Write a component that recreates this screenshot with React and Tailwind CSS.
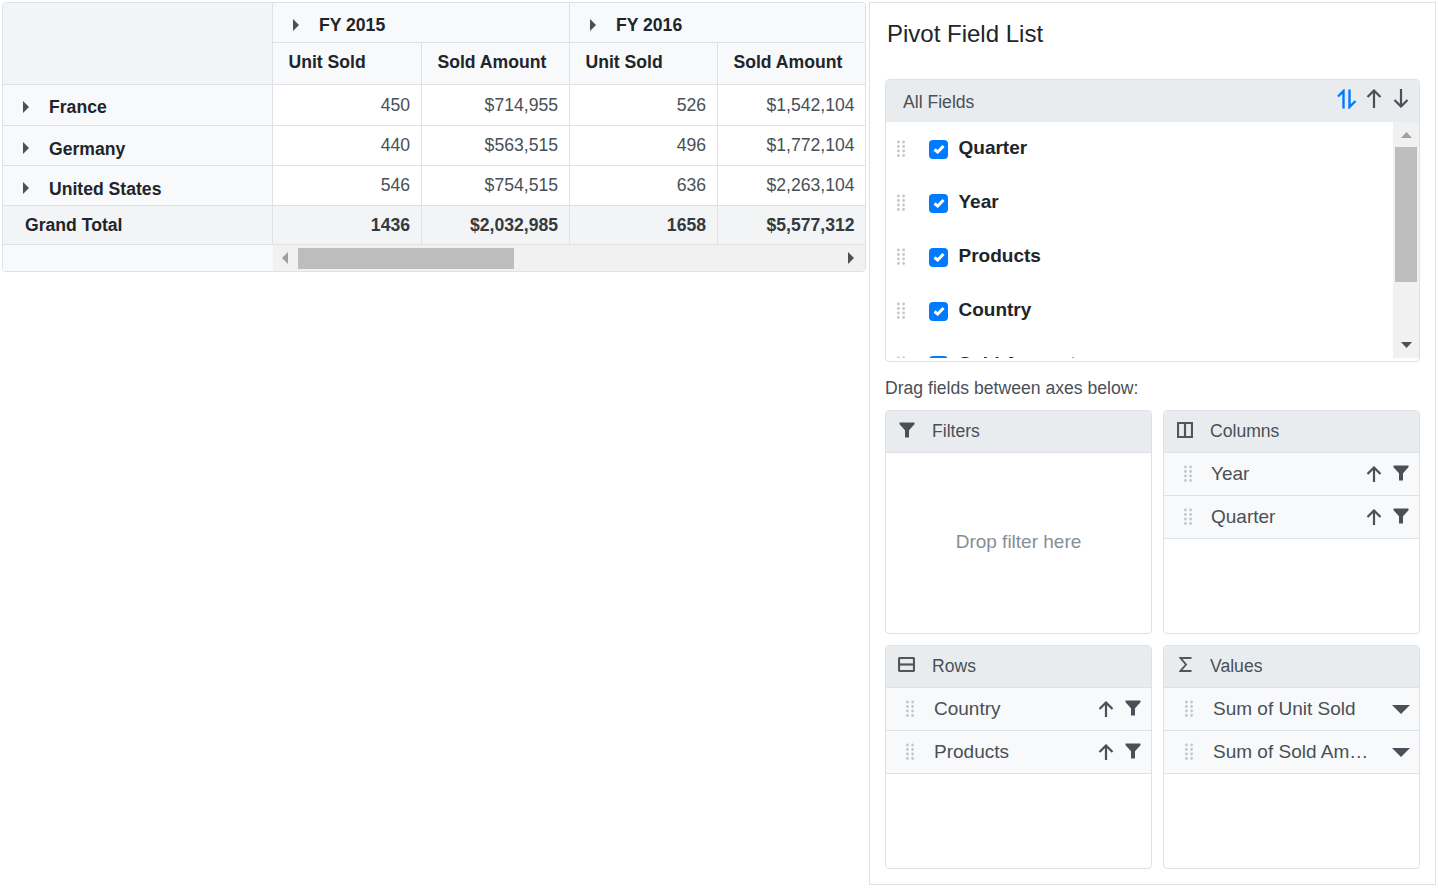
import React from 'react';

const Dots = ({ className = '' }) => (
  <svg width="8" height="18" viewBox="0 0 8 18" className={`shrink-0 ${className}`} fill="#c2c7ce">
    {[2, 6.5, 11, 15.5].map((y) => (
      <g key={y}>
        <circle cx="1.4" cy={y} r="1.4" />
        <circle cx="6.6" cy={y} r="1.4" />
      </g>
    ))}
  </svg>
);

const Funnel = ({ className = '' }) => (
  <svg width="16" height="16" viewBox="0 0 16 16" className={`shrink-0 ${className}`} fill="#495057">
    <path d="M0.5 0.5H15.5V2.2L10 8.2V15.5H6V8.2L0.5 2.2Z" />
  </svg>
);

const ArrowUp = ({ h = 16, color = '#495057', className = '' }) => (
  <svg width="16" height={h} viewBox={`0 0 16 ${h}`} className={`shrink-0 ${className}`} fill="none" stroke={color} strokeWidth="2.2">
    <path d={`M8 ${h}V2M1.5 8L8 1.5L14.5 8`} />
  </svg>
);

const ArrowDown = ({ h = 16, color = '#495057', className = '' }) => (
  <svg width="16" height={h} viewBox={`0 0 16 ${h}`} className={`shrink-0 ${className}`} fill="none" stroke={color} strokeWidth="2.2">
    <path d={`M8 0V${h - 2}M1.5 ${h - 8}L8 ${h - 1.5}L14.5 ${h - 8}`} />
  </svg>
);

const SortBoth = () => (
  <svg width="20" height="20" viewBox="0 0 20 20" className="shrink-0" fill="none" stroke="#007bff" strokeWidth="2.4">
    <path d="M6.5 19.5V2L1 7.5" />
    <path d="M12.5 0.5V18L18.5 12" />
  </svg>
);

const Caret = ({ dir }) => {
  const paths = {
    right: 'M0 0L6 6L0 12Z',
    left: 'M6 0L0 6L6 12Z',
  };
  return (
    <svg width="6" height="12" viewBox="0 0 6 12" className="shrink-0" fill="#495057">
      <path d={paths[dir]} />
    </svg>
  );
};

const CaretDown = ({ w = 18, h = 9, fill = '#495057' }) => (
  <svg width={w} height={h} viewBox="0 0 18 9" className="shrink-0" fill={fill} preserveAspectRatio="none">
    <path d="M0 0H18L9 9Z" />
  </svg>
);

const Check = () => (
  <span className="flex h-[19px] w-[19px] shrink-0 items-center justify-center rounded-[4px] bg-[#007bff]">
    <svg width="12" height="10" viewBox="0 0 12 10" fill="none" stroke="#fff" strokeWidth="3">
      <path d="M1.5 5.5L4.7 8L10.5 2" />
    </svg>
  </span>
);

const ColumnsIcon = () => (
  <svg width="16" height="16" viewBox="0 0 16 16" className="mb-[4px] shrink-0" fill="none" stroke="#555" strokeWidth="2.2">
    <path d="M1 1H15V15H1ZM8 1V15" />
  </svg>
);

const RowsIcon = () => (
  <svg width="17" height="15" viewBox="0 0 17 15" className="mb-[4px] shrink-0" fill="none" stroke="#555" strokeWidth="2.2">
    <rect x="1" y="1" width="15" height="13" rx="1" />
    <path d="M1 7.5H16" />
  </svg>
);

const SigmaIcon = () => (
  <svg width="13" height="15" viewBox="0 0 13 15" className="mb-[4px] shrink-0" fill="none" stroke="#555" strokeWidth="1.9">
    <path d="M12.5 1H1.5L7 7.5L1.5 14H12.5" />
  </svg>
);

const cell = 'flex items-center border-r border-b border-[#dee2e6]';

const data = [
  { name: 'France', h: 'pt-[3px]', vals: ['450', '$714,955', '526', '$1,542,104'] },
  { name: 'Germany', h: 'pt-[5px]', vals: ['440', '$563,515', '496', '$1,772,104'] },
  { name: 'United States', h: 'pt-[5px]', vals: ['546', '$754,515', '636', '$2,263,104'] },
];

const PivotGrid = () => (
  <div className="h-[270px] w-[864px] shrink-0 overflow-hidden rounded-[4px] border border-[#dee2e6] bg-white text-[17.6px] text-[#212529]">
    <div className="grid grid-cols-[270px_149px_148px_148px_148px] grid-rows-[40px_42px_41px_40px_40px_39px]">
      <div className={`${cell} row-span-2 bg-[#f3f4f6]`} />
      <div className={`${cell} col-span-2 gap-[20px] bg-[#f8f9fa] pl-[20px] pt-[4px] font-bold`}>
        <Caret dir="right" />
        <span className="mt-[2px]">FY 2015</span>
      </div>
      <div className={`${cell} col-span-2 gap-[20px] border-r-0 bg-[#f8f9fa] pl-[20px] pt-[4px] font-bold`}>
        <Caret dir="right" />
        <span className="mt-[2px]">FY 2016</span>
      </div>
      {['Unit Sold', 'Sold Amount', 'Unit Sold', 'Sold Amount'].map((t, i) => (
        <div key={i} className={`${cell} bg-[#f8f9fa] pb-[3px] pl-[15.5px] font-bold ${i === 3 ? 'border-r-0' : ''}`}>
          {t}
        </div>
      ))}
      {data.map((row) => (
        <React.Fragment key={row.name}>
          <div className={`${cell} gap-[20px] bg-[#f8f9fa] pl-[20px] font-bold ${row.h}`}>
            <Caret dir="right" />
            <span className="mt-[2px]">{row.name}</span>
          </div>
          {row.vals.map((v, i) => (
            <div key={i} className={`${cell} justify-end text-[#495057] ${i === 3 ? 'border-r-0 pr-[11.5px]' : 'pr-[11px]'}`}>
              {v}
            </div>
          ))}
        </React.Fragment>
      ))}
      <div className={`${cell} bg-[#f3f4f6] pl-[22px] font-bold`}>Grand Total</div>
      {['1436', '$2,032,985', '1658', '$5,577,312'].map((v, i) => (
        <div key={i} className={`${cell} justify-end bg-[#f3f4f6] font-bold text-[#343a40] ${i === 3 ? 'border-r-0 pr-[11.5px]' : 'pr-[11px]'}`}>
          {v}
        </div>
      ))}
    </div>
    {/* horizontal scrollbar */}
    <div className="flex h-[26px]">
      <div className="w-[270px] bg-[#f8f9fa]" />
      <div className="flex flex-1 items-center bg-[#f1f1f1]">
        <div className="flex h-full w-[25px] items-center justify-center pr-[2px] opacity-50">
          <Caret dir="left" />
        </div>
        <div className="h-[21px] w-[216px] bg-[#bdbdbd]" />
        <div className="flex-1" />
        <div className="flex h-full w-[27px] items-center justify-center pr-[2px]">
          <Caret dir="right" />
        </div>
      </div>
    </div>
  </div>
);

const fields = ['Quarter', 'Year', 'Products', 'Country', 'Sold Amount'];

const AllFields = () => (
  <div className="h-[283px] rounded-[4px] border border-[#dee2e6] bg-white">
    <div className="flex h-[42px] items-center justify-between rounded-t-[4px] bg-[#e9ecef] pl-[17px] pr-[10px] text-[17.6px] text-[#495057]">
      <span className="mt-[2px]">All Fields</span>
      <div className="mb-[5px] flex items-center">
        <SortBoth />
        <ArrowUp h={19} className="ml-[9px]" />
        <ArrowDown h={19} className="ml-[11px]" />
      </div>
    </div>
    <div className="flex h-[236px] overflow-hidden">
      <div className="min-w-0 flex-1">
        {fields.map((f) => (
          <div key={f} className="flex h-[54px] items-center pl-[11px]">
            <Dots />
            <div className="ml-[24px]"><Check /></div>
            <span className="ml-[10.5px] pb-[1px] text-[19px] font-bold text-[#212529]">{f}</span>
          </div>
        ))}
      </div>
      <div className="flex w-[26px] shrink-0 flex-col items-center bg-[#f1f1f1]">
        <div className="flex h-[25px] items-center justify-center">
          <svg width="11" height="6" viewBox="0 0 11 6" fill="#a0a0a0"><path d="M0 6L5.5 0L11 6Z" /></svg>
        </div>
        <div className="h-[135px] w-[22px] bg-[#bdbdbd]" />
        <div className="flex-1" />
        <div className="flex h-[26px] items-center justify-center">
          <CaretDown w={11} h={6} />
        </div>
      </div>
    </div>
  </div>
);

const Pill = ({ label, dotsPl, labelMl, value }) => (
  <div className={`flex h-[43px] items-center border-b border-[#dee2e6] bg-[#f8f9fa] ${value ? 'pr-[9px]' : 'pr-[10px]'} ${dotsPl}`}>
    <Dots />
    <span className={`min-w-0 flex-1 truncate text-[19px] text-[#495057] ${labelMl}`}>{label}</span>
    {value ? (
      <div className="ml-[20px]"><CaretDown /></div>
    ) : (
      <div className="flex items-center gap-[11px]">
        <ArrowUp />
        <Funnel className="mb-[2px]" />
      </div>
    )}
  </div>
);

const Axis = ({ title, icon, iconPl, titleMl, children, className = '' }) => (
  <div className={`flex h-[224px] flex-col rounded-[4px] border border-[#dee2e6] bg-white ${className}`}>
    <div className={`flex h-[42px] shrink-0 items-center rounded-t-[4px] border-b border-[#dee2e6] bg-[#e9ecef] text-[17.6px] text-[#495057] ${iconPl}`}>
      {icon}
      <span className={titleMl}>{title}</span>
    </div>
    {children}
  </div>
);

const FieldList = () => (
  <div className="flex h-[883px] w-[567px] shrink-0 flex-col border border-[#dee2e6] bg-white px-[15px]">
    <div className="flex h-[76px] shrink-0 items-start pl-[2px] pt-[13px] text-[24px] text-[#212529]">Pivot Field List</div>
    <AllFields />
    <div className="flex h-[48px] shrink-0 items-center pt-[4px] text-[17.6px] text-[#495057]">Drag fields between axes below:</div>
    <div className="grid grid-cols-[267px_257px] gap-x-[11px] gap-y-[11px]">
      <Axis title="Filters" icon={<Funnel className="mb-[4px]" />} iconPl="pl-[13px]" titleMl="ml-[17px]">
        <div className="flex flex-1 items-center justify-center pb-[2px] text-[19px] text-[#868e96]">Drop filter here</div>
      </Axis>
      <Axis title="Columns" icon={<ColumnsIcon />} iconPl="pl-[13px]" titleMl="ml-[17px]">
        <Pill label="Year" dotsPl="pl-[20px]" labelMl="ml-[19px]" />
        <Pill label="Quarter" dotsPl="pl-[20px]" labelMl="ml-[19px]" />
      </Axis>
      <Axis title="Rows" icon={<RowsIcon />} iconPl="pl-[12px]" titleMl="ml-[17px]">
        <Pill label="Country" dotsPl="pl-[20px]" labelMl="ml-[20px]" />
        <Pill label="Products" dotsPl="pl-[20px]" labelMl="ml-[20px]" />
      </Axis>
      <Axis title="Values" icon={<SigmaIcon />} iconPl="pl-[15px]" titleMl="ml-[18px]">
        <Pill value label="Sum of Unit Sold" dotsPl="pl-[21px]" labelMl="ml-[20px]" />
        <Pill value label="Sum of Sold Amount" dotsPl="pl-[21px]" labelMl="ml-[20px]" />
      </Axis>
    </div>
  </div>
);

export default function App() {
  return (
    <div className="flex items-start gap-[3px] bg-white p-[2px] font-['Liberation_Sans',Arial,sans-serif]">
      <PivotGrid />
      <FieldList />
    </div>
  );
}
